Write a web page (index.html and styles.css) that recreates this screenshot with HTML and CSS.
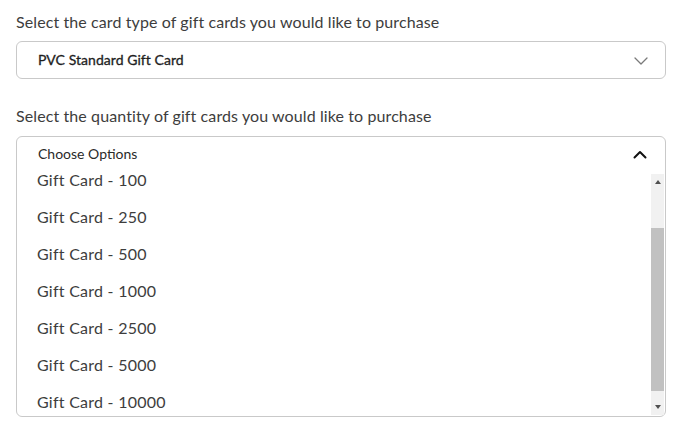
FILE: index.html
```html
<!DOCTYPE html>
<html lang="en">
<head>
<meta charset="utf-8">
<title>Gift cards</title>
<link rel="stylesheet" href="styles.css">
</head>
<body>
<main class="form">
  <label class="label">Select the card type of gift cards you would like to purchase</label>
  <div class="select">
    <span class="select-value">PVC Standard Gift Card</span>
    <svg class="chev-down" width="14" height="8" viewBox="0 0 14 8"><path d="M1 1 L7 7 L13 1" fill="none" stroke="#7a7a7a" stroke-width="1.3" stroke-linecap="round" stroke-linejoin="round"/></svg>
  </div>

  <label class="label label-2">Select the quantity of gift cards you would like to purchase</label>
  <div class="dropdown">
    <div class="dd-head">
      <span class="dd-title">Choose Options</span>
      <svg class="chev-up" width="14" height="9" viewBox="0 0 14 9"><path d="M1.5 7.5 L7 2 L12.5 7.5" fill="none" stroke="#111" stroke-width="2" stroke-linecap="round" stroke-linejoin="round"/></svg>
    </div>
    <div class="dd-body">
      <ul class="options">
        <li>Gift Card - 100</li>
        <li>Gift Card - 250</li>
        <li>Gift Card - 500</li>
        <li>Gift Card - 1000</li>
        <li>Gift Card - 2500</li>
        <li>Gift Card - 5000</li>
        <li>Gift Card - 10000</li>
      </ul>
      <div class="scrollbar">
        <div class="sb-btn"><span class="tri-up"></span></div>
        <div class="sb-gap-top"></div>
        <div class="sb-thumb"></div>
        <div class="sb-gap-bottom"></div>
        <div class="sb-btn"><span class="tri-down"></span></div>
      </div>
    </div>
  </div>
</main>
</body>
</html>
```

FILE: styles.css
```css
* { box-sizing: border-box; }
html, body { margin: 0; padding: 0; background: #fff; }
body {
  font-family: "Lato", "Liberation Sans", sans-serif;
  color: #3a3a3a;
}
.form {
  width: 650px;
  margin-left: 16px;
  padding-top: 13px;
  display: flex;
  flex-direction: column;
}
.label {
  display: block;
  font-size: 16px;
  line-height: 18px;
  color: #3d3d3d;
  letter-spacing: 0.1px;
}
.select {
  margin-top: 10px;
  height: 38px;
  border: 1px solid #c9c9c9;
  border-radius: 6px;
  display: flex;
  align-items: center;
  justify-content: space-between;
  padding: 0 17px 0 21px;
}
.select-value {
  font-size: 14px;
  font-weight: 400;
  color: #1e1e1e;
  line-height: 18px;
  letter-spacing: 0.05px;
  -webkit-text-stroke: 0.3px #1e1e1e;
}
.chev-down { display: block; margin-top: 1px; }
.label-2 { margin-top: 28px; }
.dropdown {
  margin-top: 11px;
  height: 281px;
  border: 1px solid #c9c9c9;
  border-radius: 6px;
  display: flex;
  flex-direction: column;
}
.dd-head {
  height: 35px;
  display: flex;
  align-items: center;
  justify-content: space-between;
  padding: 0 18px 2px 21px;
}
.dd-title {
  font-size: 14px;
  line-height: 18px;
  color: #2a2a2a;
}
.chev-up { display: block; margin-top: 2px; }
.dd-body {
  flex: 1;
  display: flex;
  min-height: 0;
}
.options {
  list-style: none;
  margin: -1px 0 0 0;
  padding: 0 0 0 20px;
  flex: 1;
  display: flex;
  flex-direction: column;
  gap: 19px;
}
.options li {
  font-size: 16px;
  line-height: 18px;
  color: #3d3d3d;
  letter-spacing: 0.25px;
}
.scrollbar {
  width: 13px;
  margin: 2px 1px 1px 0;
  background: #f1f1f1;
  display: flex;
  flex-direction: column;
}
.sb-btn {
  height: 16px;
  display: flex;
  align-items: center;
  justify-content: center;
}
.sb-gap-top { height: 38px; }
.sb-thumb { height: 163px; background: #c1c1c1; }
.sb-gap-bottom { flex: 1; }
.tri-up, .tri-down {
  width: 0; height: 0;
  border-left: 3.5px solid transparent;
  border-right: 3.5px solid transparent;
}
.tri-up { border-bottom: 4px solid #505050; }
.tri-down { border-top: 4px solid #505050; }
```
